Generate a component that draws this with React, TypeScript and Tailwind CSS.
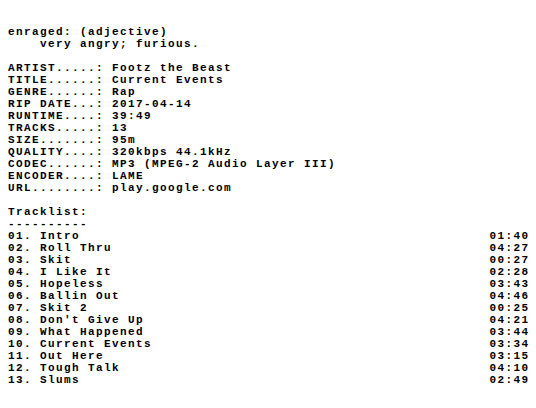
const info: [string, string][] = [
  ['ARTIST.....', 'Footz the Beast'],
  ['TITLE......', 'Current Events'],
  ['GENRE......', 'Rap'],
  ['RIP DATE...', '2017-04-14'],
  ['RUNTIME....', '39:49'],
  ['TRACKS.....', '13'],
  ['SIZE.......', '95m'],
  ['QUALITY....', '320kbps 44.1kHz'],
  ['CODEC......', 'MP3 (MPEG-2 Audio Layer III)'],
  ['ENCODER....', 'LAME'],
  ['URL........', 'play.google.com'],
];

const tracks: [string, string][] = [
  ['Intro', '01:40'],
  ['Roll Thru', '04:27'],
  ['Skit', '00:27'],
  ['I Like It', '02:28'],
  ['Hopeless', '03:43'],
  ['Ballin Out', '04:46'],
  ['Skit 2', '00:25'],
  ["Don't Give Up", '04:21'],
  ['What Happened', '03:44'],
  ['Current Events', '03:34'],
  ['Out Here', '03:15'],
  ['Tough Talk', '04:10'],
  ['Slums', '02:49'],
];

export default function App() {
  return (
    <div className="w-[536px] h-[408px] bg-white text-black px-2 pt-[26px] font-['Liberation_Mono',monospace] font-bold text-[11px] leading-[12px] tracking-[1.4px] whitespace-pre overflow-hidden">
      <div>enraged: (adjective)</div>
      <div>    very angry; furious.</div>
      <div className="h-3" />
      {info.map(([k, v]) => (
        <div key={k}>{k}: {v}</div>
      ))}
      <div className="h-3" />
      <div>Tracklist:</div>
      <div>----------</div>
      {tracks.map(([name, time], i) => (
        <div key={i} className="flex justify-between">
          <span>{String(i + 1).padStart(2, '0')}. {name}</span>
          <span className="-mr-[1.4px]">{time}</span>
        </div>
      ))}
    </div>
  );
}
